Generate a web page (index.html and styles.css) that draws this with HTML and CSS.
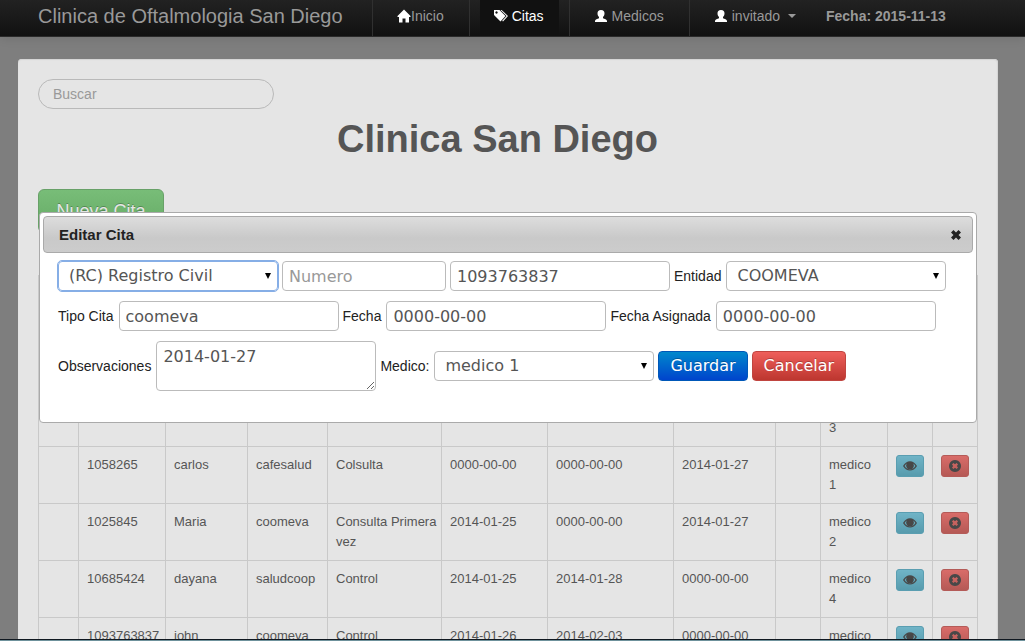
FILE: index.html
```
<!DOCTYPE html>
<html lang="es">
<head>
<meta charset="utf-8">
<title>Clinica San Diego</title>
<link rel="stylesheet" href="styles.css">
</head>
<body>
<svg class="symbols" aria-hidden="true">
  <symbol id="home" viewBox="0 0 14 14"><path d="M7 .5 13.500 7v1H12v5.500H8.500V9.500h-3v4H2V8H.5V7z"/></symbol>
  <symbol id="tags" viewBox="0 0 14 14"><path fill-rule="evenodd" d="M0 1h5.500l6 6-5 5.500L0 6zM2.500 2.300a1.200 1.200 0 1 0 .01 0z"/><path d="M6.500 1h1.200l6.300 6-5 5.500-.8-.8L12.600 7z"/></symbol>
  <symbol id="user" viewBox="0 0 14 14"><path d="M7 1c2.500 0 3.500 1.300 3.500 3.200 0 1.700-.6 2.900-1.500 3.700v1.300c1.500.8 4 1.100 4 2.700V13H1v-1.100c0-1.600 2.500-1.900 4-2.700V7.900C4.100 7.100 3.500 5.900 3.500 4.200 3.500 2.300 4.500 1 7 1z"/></symbol>
  <symbol id="eye" viewBox="0 0 14 14"><path fill-rule="evenodd" d="M0 7C3.500.7 10.500.7 14 7c-3.500 6-10.500 6-14 0zm1.600 0c2.600 4.300 8.200 4.300 10.800 0-.7-1.200-1.400-1.900-2.300-2.400a3.700 3.700 0 1 1-6.200 0C3 5.100 2.300 5.800 1.600 7z"/><path d="M5.200 4.300a3 3 0 1 0 3.600 0c.9 3.200-2.700 3.700-3.600 0z"/><circle cx="7" cy="6.500" r="2"/></symbol>
  <symbol id="remove" viewBox="0 0 14 14"><path fill-rule="evenodd" d="M7 1a6 6 0 1 0 .01 0zM5.400 4 7 5.200 8.600 4 10 5.400 8.800 7 10 8.600 8.600 10 7 8.800 5.400 10 4 8.600 5.200 7 4 5.400z"/></symbol>
  <symbol id="close" viewBox="0 0 10 10"><path d="M2.500 0 5 2.500 7.500 0 10 2.500 7.500 5 10 7.500 7.500 10 5 7.500 2.500 10 0 7.500 2.500 5 0 2.500z"/></symbol>
</svg>

<nav class="navbar">
  <a class="brand" href="#">Clinica de Oftalmologia San Diego</a>
  <ul class="nav">
    <li><a href="#"><svg class="icon"><use href="#home"/></svg>Inicio</a></li>
    <li><a class="active" href="#"><svg class="icon spaced"><use href="#tags"/></svg>Citas</a></li>
    <li><a href="#"><svg class="icon spaced"><use href="#user"/></svg>Medicos</a></li>
    <li><a href="#"><svg class="icon spaced"><use href="#user"/></svg>invitado<span class="caret"></span></a></li>
  </ul>
  <strong class="date">Fecha: 2015-11-13</strong>
</nav>

<main class="well">
  <input class="search" type="search" placeholder="Buscar" aria-label="Buscar">
  <h1>Clinica San Diego</h1>
  <button class="new" type="button">Nueva Cita</button>
  <table>
    <colgroup><col class="c-mark"><col class="c-id"><col class="c-name"><col class="c-entity"><col class="c-type"><col class="c-date"><col class="c-assigned"><col class="c-notes"><col class="c-blank"><col class="c-doctor"><col class="c-action"><col class="c-action"></colgroup>
    <tbody>
      <tr><td></td><td></td><td></td><td></td><td></td><td></td><td></td><td></td><td></td><td>medico 5</td><td></td><td></td></tr>
      <tr><td></td><td></td><td></td><td></td><td></td><td></td><td></td><td></td><td></td><td>medico 2</td><td></td><td></td></tr>
      <tr><td></td><td></td><td></td><td></td><td></td><td></td><td></td><td></td><td></td><td>medico 3</td><td></td><td></td></tr>
      <tr><td></td><td>1058265</td><td>carlos</td><td>cafesalud</td><td>Colsulta</td><td>0000-00-00</td><td>0000-00-00</td><td>2014-01-27</td><td></td><td>medico 1</td><td><button class="mini info" type="button" aria-label="Ver"><svg class="icon"><use href="#eye"/></svg></button></td><td><button class="mini danger" type="button" aria-label="Eliminar"><svg class="icon"><use href="#remove"/></svg></button></td></tr>
      <tr><td></td><td>1025845</td><td>Maria</td><td>coomeva</td><td>Consulta Primera vez</td><td>2014-01-25</td><td>0000-00-00</td><td>2014-01-27</td><td></td><td>medico 2</td><td><button class="mini info" type="button" aria-label="Ver"><svg class="icon"><use href="#eye"/></svg></button></td><td><button class="mini danger" type="button" aria-label="Eliminar"><svg class="icon"><use href="#remove"/></svg></button></td></tr>
      <tr><td></td><td>10685424</td><td>dayana</td><td>saludcoop</td><td>Control</td><td>2014-01-25</td><td>2014-01-28</td><td>0000-00-00</td><td></td><td>medico 4</td><td><button class="mini info" type="button" aria-label="Ver"><svg class="icon"><use href="#eye"/></svg></button></td><td><button class="mini danger" type="button" aria-label="Eliminar"><svg class="icon"><use href="#remove"/></svg></button></td></tr>
      <tr><td></td><td>1093763837</td><td>john</td><td>coomeva</td><td>Control</td><td>2014-01-26</td><td>2014-02-03</td><td>0000-00-00</td><td></td><td>medico</td><td><button class="mini info" type="button" aria-label="Ver"><svg class="icon"><use href="#eye"/></svg></button></td><td><button class="mini danger" type="button" aria-label="Eliminar"><svg class="icon"><use href="#remove"/></svg></button></td></tr>
    </tbody>
  </table>
</main>

<section class="dialog" role="dialog" aria-labelledby="dialog-title">
  <header class="titlebar">
    <h2 id="dialog-title">Editar Cita</h2>
    <button class="close" type="button" aria-label="Cerrar"><svg><use href="#close"/></svg></button>
  </header>
  <form>
    <div class="row">
      <select class="field focused" aria-label="Tipo de documento"><option>(RC) Registro Civil</option></select>
      <input class="field short" type="text" placeholder="Numero" aria-label="Numero">
      <input class="field" type="text" value="1093763837" aria-label="Documento">
      <label for="entidad">Entidad</label>
      <select class="field" id="entidad"><option>COOMEVA</option></select>
    </div>
    <div class="row">
      <label for="tipo">Tipo Cita</label>
      <input class="field" id="tipo" type="text" value="coomeva">
      <label for="fecha">Fecha</label>
      <input class="field" id="fecha" type="text" value="0000-00-00">
      <label for="asignada">Fecha Asignada</label>
      <input class="field" id="asignada" type="text" value="0000-00-00">
    </div>
    <div class="row">
      <label for="obs">Observaciones</label>
      <textarea class="field" id="obs">2014-01-27</textarea>
      <label for="medico">Medico:</label>
      <select class="field" id="medico"><option>medico 1</option></select>
      <button class="btn primary" type="submit">Guardar</button>
      <button class="btn cancel" type="button">Cancelar</button>
    </div>
  </form>
</section>
<div class="taskbar-edge"></div>
</body>
</html>
```
FILE: styles.css
```
* { box-sizing: border-box; }
html { height: 100%; }
body {
  height: 100%;
  margin: 0;
  overflow: hidden;
  background: #7e7e7e;
  color: #555;
  font: 14px/20px "Liberation Sans", Arial, sans-serif;
}
.symbols { position: absolute; width: 0; height: 0; }
.icon { flex: none; width: 14px; height: 14px; fill: currentColor; }

/* Navigation */
.navbar {
  display: flex;
  height: 37px;
  padding-left: 38px;
  border-bottom: 1px solid #2a2a2a;
  background: linear-gradient(#222, #111);
  box-shadow: 0 1px 10px rgba(0, 0, 0, .12);
  color: #999;
}
.brand { width: 334px; padding-top: 6px; color: #999; font-size: 20px; text-decoration: none; white-space: nowrap; }
.nav { display: flex; margin: 0; padding: 0; list-style: none; }
.nav li { display: flex; padding: 0 10px; border-left: 1px solid #303030; }
.nav li:last-child { padding-right: 0; }
.nav a { display: flex; padding: 6px 15px 10px 14px; color: #999; text-decoration: none; }
.nav .active { background: #111; color: #fff; }
.nav .icon { margin-top: 3px; color: #fff; }
.nav .spaced { margin-right: 4px; }
.caret { align-self: flex-start; margin: 8px 0 0 8px; border: 4px solid transparent; border-top-color: #999; border-bottom: 0; }
.date { padding: 6px 15px; }

/* Page */
.well {
  margin: 22px 27px 0 18px;
  padding: 20px 20px 0;
  border-radius: 4px;
  background: #e5e5e5;
  box-shadow: inset 0 1px 1px #d4d4d4, inset -1px 0 1px #d4d4d4;
}
.search {
  display: block;
  width: 236px;
  height: 30px;
  padding: 4px 14px;
  border: 1px solid #b9b9b9;
  border-radius: 15px;
  background: transparent;
  font: inherit;
}
.search::placeholder { color: #999; }
h1 { margin: 10px 0 30px; padding-right: 21px; font-size: 38px; line-height: 40px; text-align: center; }
.new {
  display: block;
  width: 126px;
  height: 44px;
  margin-bottom: 42px;
  border: 1px solid #68a168;
  border-radius: 6px;
  background: linear-gradient(#78bd78, #64a964);
  color: #e5e5e5;
  font: 18px/20px "Liberation Sans", Arial, sans-serif;
  text-shadow: 0 -1px 0 rgba(0, 0, 0, .25);
}
table { width: 100%; table-layout: fixed; border-collapse: collapse; font-size: 13px; }
td { height: 57px; padding: 8px 2px 8px 8px; border: 1px solid #c9c9c9; vertical-align: top; }
.c-mark { width: 40px; }
.c-id { width: 87px; }
.c-name { width: 82px; }
.c-entity { width: 80px; }
.c-type { width: 114px; }
.c-date { width: 106px; }
.c-assigned { width: 126px; }
.c-notes { width: 102px; }
.c-blank { width: 45px; }
.c-doctor { width: 67px; }
.c-action { width: 45px; }
td:nth-child(10) { padding-right: 16px; }
.mini { display: flex; align-items: center; justify-content: center; width: 28px; height: 22px; padding: 0; border: 1px solid; border-radius: 3px; color: #484848; }
.info { border-color: #5a9eb1; background: linear-gradient(#70b4c7, #579bad); }
.danger { border-color: #b45b58; background: linear-gradient(#d96c69, #b55955); }

/* Dialog */
.dialog {
  position: absolute;
  top: 212px;
  right: 48px;
  left: 39px;
  padding: 3px 3px 31px;
  border: 1px solid #aaa;
  border-radius: 4px;
  background: #fff;
  color: #222;
}
.titlebar {
  display: flex;
  align-items: center;
  justify-content: space-between;
  height: 37px;
  padding: 0 11px 0 15px;
  border: 1px solid #aaa;
  border-radius: 4px;
  background: linear-gradient(#ddd, #c9c9c9 60%, #ccc);
}
h2 { margin: 0; font-size: 15px; }
.close { display: flex; padding: 0; border: 0; background: none; fill: #222; }
.close svg { width: 10px; height: 10px; }
form { display: flex; flex-direction: column; gap: 10px; padding: 8px 14px 0 15px; }
.row { display: flex; align-items: center; gap: 4px; white-space: nowrap; }
label { padding-right: 1px; }
.field {
  width: 220px;
  height: 30px;
  padding: 4px 6px;
  border: 1px solid #bbb;
  border-radius: 4px;
  background: #fff;
  color: #555;
  font: 16px/20px "DejaVu Sans", Verdana, sans-serif;
}
.field::placeholder { color: #999; }
.short { width: 164px; }
select.field {
  padding-left: 10px;
  appearance: none;
  background: #fff url("data:image/svg+xml,%3Csvg xmlns='http://www.w3.org/2000/svg' width='6' height='6'%3E%3Cpath d='M0 0h6L3 6z'/%3E%3C/svg%3E") no-repeat right 6px center;
}
select.focused { border-color: #86aee6; outline: 1px solid #86aee6; }
textarea.field { height: 50px; padding-top: 5px; resize: both; }
.btn { height: 30px; padding: 4px 11px; border: 1px solid; border-radius: 4px; color: #fff; font: 16px/20px "DejaVu Sans", Verdana, sans-serif; text-shadow: 0 -1px 0 rgba(0, 0, 0, .25); }
.primary { border-color: #0058b8; background: linear-gradient(#0088cc, #0044cc); }
.cancel { border-color: #c04540; background: linear-gradient(#ee5f5b, #bd362f); }

.taskbar-edge { position: absolute; right: 0; bottom: 0; left: 0; height: 2px; border-top: 1px solid #101820; background: #6f929c; }
```
